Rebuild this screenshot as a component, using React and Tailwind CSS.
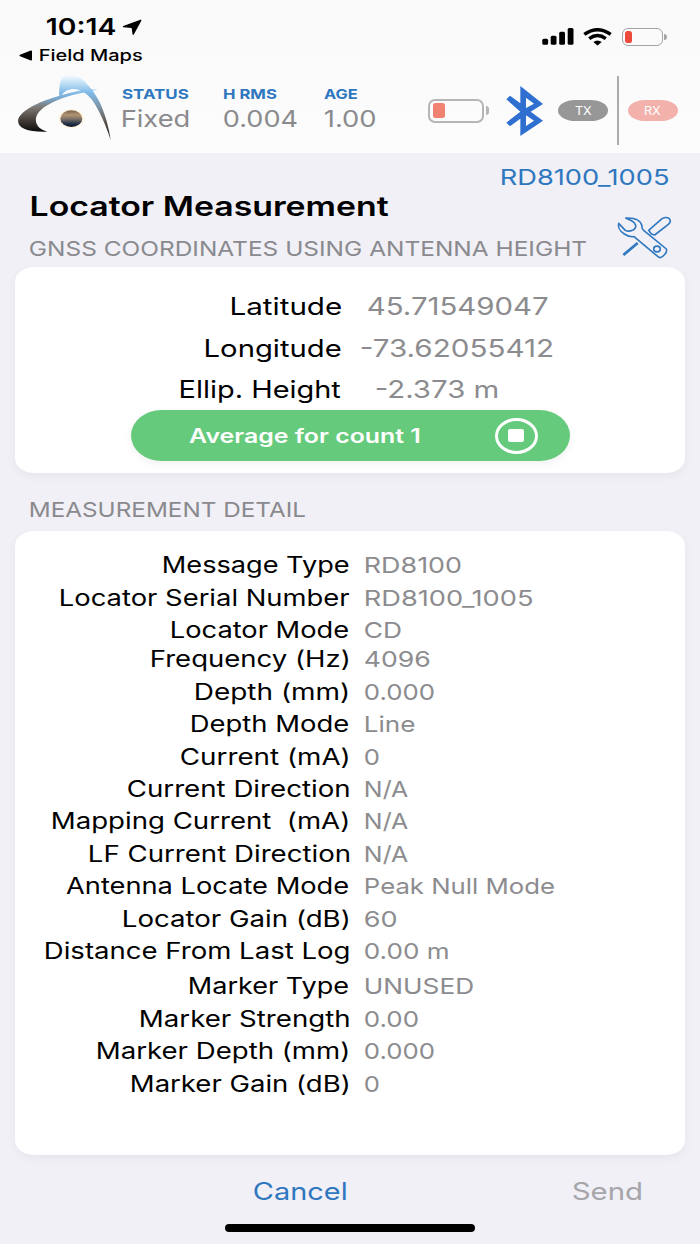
import { useLayoutEffect, useRef, useState } from "react";

// Text stretched horizontally so that its glyphs span exactly `w` pixels.
function Fit({ w, className = "", children }) {
  const ref = useRef(null);
  const [fit, setFit] = useState({ s: 1, x: 0 });
  useLayoutEffect(() => {
    const cs = getComputedStyle(ref.current);
    const ctx = document.createElement("canvas").getContext("2d");
    ctx.font = `${cs.fontWeight} ${cs.fontSize} ${cs.fontFamily}`;
    const m = ctx.measureText(children);
    const s = w / (m.actualBoundingBoxRight + m.actualBoundingBoxLeft);
    setFit({ s, x: m.actualBoundingBoxLeft * s });
  }, [w, children]);
  return (
    <div className={`shrink-0 whitespace-pre ${className}`} style={{ width: w }}>
      <span
        ref={ref}
        className="inline-block origin-left align-top"
        style={{ transform: `translateX(${fit.x}px) scaleX(${fit.s})` }}
      >
        {children}
      </span>
    </div>
  );
}

const groups = [
  [
    ["Message Type", 186.5, "RD8100", 96],
    ["Locator Serial Number", 289, "RD8100_1005", 168],
    ["Locator Mode", 178, "CD", 36],
  ],
  [
    ["Frequency (Hz)", 197, "4096", 65],
    ["Depth (mm)", 152.5, "0.000", 69],
    ["Depth Mode", 158, "Line", 49.5],
    ["Current (mA)", 167, "0", 14],
    ["Current Direction", 221, "N/A", 43],
    ["Mapping Current  (mA)", 295.5, "N/A", 43],
    ["LF Current Direction", 260.5, "N/A", 43],
    ["Antenna Locate Mode", 283, "Peak Null Mode", 189],
    ["Locator Gain (dB)", 225, "60", 31.5],
    ["Distance From Last Log", 304.5, "0.00 m", 83],
  ],
  [
    ["Marker Type", 160, "UNUSED", 108],
    ["Marker Strength", 209, "0.00", 53],
    ["Marker Depth (mm)", 250.5, "0.000", 69],
    ["Marker Gain (dB)", 217, "0", 14],
  ],
];

const coords = [
  ["Latitude", 109, "45.71549047", 180, "pl-[27.5px]"],
  ["Longitude", 134.5, "-73.62055412", 191, "pl-[20px]"],
  ["Ellip. Height", 160, "-2.373 m", 122, "pl-[35px]"],
];

function Stat({ label, lw, value, vw, className }) {
  return (
    <div className={`flex flex-col ${className}`}>
      <Fit w={lw} className="h-[16px] text-[13.5px] leading-[16px] font-bold text-[#2f77be]">{label}</Fit>
      <div className="h-[34px] pl-px">
        <Fit w={vw} className="text-[23px] leading-[34px] text-[#8a8a8d]">{value}</Fit>
      </div>
    </div>
  );
}

function Logo() {
  return (
    <svg className="h-[67px] w-[96px] shrink-0" viewBox="52 222 288 201">
      <defs>
        <linearGradient id="arc" gradientUnits="userSpaceOnUse" x1="0" y1="226" x2="0" y2="415">
          <stop offset="0" stopColor="#f6fbfe" />
          <stop offset=".14" stopColor="#b9dcf5" />
          <stop offset=".28" stopColor="#7fb9e6" />
          <stop offset=".48" stopColor="#7c99b0" />
          <stop offset=".68" stopColor="#6e655e" />
          <stop offset="1" stopColor="#111" />
        </linearGradient>
        <linearGradient id="swoosh" gradientUnits="userSpaceOnUse" x1="0" y1="268" x2="0" y2="398">
          <stop offset="0" stopColor="#8cc6f2" />
          <stop offset=".2" stopColor="#79a9d0" />
          <stop offset=".42" stopColor="#7d7872" />
          <stop offset=".75" stopColor="#3c3531" />
          <stop offset="1" stopColor="#080808" />
        </linearGradient>
        <linearGradient id="ball" x1="0" y1="0" x2="0" y2="1">
          <stop offset="0" stopColor="#7a6252" />
          <stop offset=".28" stopColor="#b39473" />
          <stop offset=".52" stopColor="#7c7068" />
          <stop offset=".8" stopColor="#25324a" />
          <stop offset="1" stopColor="#081226" />
        </linearGradient>
      </defs>
      <path fill="url(#arc)" d="M179 289C177 262 181 240 190 231C205 224 228 224 243 234C267 253 289 283 303 313C317 345 327 380 333 420C324 391 309 354 291 322C279 300 266 283 246 274C226 262 199 266 186 286Z" />
      <path fill="url(#swoosh)" d="M293 269C258 265 213 276 170 290C115 306 64 332 56 357C50 384 83 397 143 395C119 389 106 374 109 354C113 331 142 312 190 294C225 281 260 276 293 269Z" />
      <ellipse cx="215" cy="356" rx="38" ry="29" fill="#fff6e2" />
      <ellipse cx="215" cy="356" rx="33" ry="25" fill="url(#ball)" />
      <text x="143" y="374" fontSize="46" fontFamily="Liberation Serif, serif" fill="#fff">E</text>
      <text x="257" y="374" fontSize="46" fontFamily="Liberation Serif, serif" fill="#fff">S</text>
    </svg>
  );
}

export default function App() {
  return (
    <div className="flex h-[1244px] w-[700px] flex-col overflow-hidden bg-[#f1f0f6] font-['Inter',sans-serif] text-black">
      <header className="flex h-[153px] shrink-0 flex-col bg-linear-to-b from-[#f9f9f9] to-[#fcfcfc]">
        {/* Status bar */}
        <div className="flex h-[76px] justify-between">
          <div className="pt-[14px]">
            <div className="flex h-[26px] items-center pl-[47px]">
              <Fit w={68} className="text-[22.5px] leading-[26px] font-semibold">10:14</Fit>
              <svg className="ml-[7px] h-[17px] w-[20px]" viewBox="0 0 20 17">
                <path d="M1.5 7.6L18.7 1.3L11.2 15.2L10.4 9L9.6 8.3Z" stroke="#000" strokeWidth="1.4" strokeLinejoin="round" />
              </svg>
            </div>
            <div className="flex h-[31px] items-center pl-[19px]">
              <svg className="h-[11px] w-[13px]" viewBox="0 0 13 11">
                <path d="M11.8.5Q13 .2 13 1.4V9.6Q13 10.8 11.8 10.5L1 6.2Q-.2 5.5 1 4.8Z" />
              </svg>
              <Fit w={102} className="ml-[8px] text-[15.8px] leading-[31px] font-medium">Field Maps</Fit>
            </div>
          </div>
          <div className="flex h-[73px] items-center pr-[33.5px]">
            <svg className="h-[17px] w-[32px]" viewBox="0 0 32 17">
              <rect x=".3" y="10.7" width="5.8" height="6" rx="1.5" />
              <rect x="8.7" y="7.7" width="5.8" height="9" rx="1.5" />
              <rect x="17.2" y="3.8" width="5.8" height="12.9" rx="1.5" />
              <rect x="25.7" y="0" width="5.8" height="16.7" rx="1.5" />
            </svg>
            <svg className="ml-[9px] h-[18px] w-[29px]" viewBox="0 0 29 18">
              <path d="M14.5 17.4L10.3 14Q14.5 11 18.7 14Z" />
              <path d="M6.2 10.6Q14.5 4.4 22.8 10.6M1.3 6.4Q14.5 -2.9 27.7 6.4" fill="none" stroke="#000" strokeWidth="3.5" />
            </svg>
            <div className="ml-[10px] h-[18px] w-[41px] rounded-[6px] border-[1.5px] border-[#a4a4a4] p-[2px]">
              <div className="h-[12px] w-[7px] rounded-[2.5px] bg-[#ec4a3a]" />
            </div>
            <div className="ml-px h-[6px] w-[2.5px] rounded-r-full bg-[#a4a4a4]" />
          </div>
        </div>
        {/* Receiver status */}
        <div className="flex h-[77px]">
          <div className="-mt-[2px] ml-[17px]"><Logo /></div>
          <Stat className="ml-[8.5px] pt-[10px]" label="STATUS" lw={67} value="Fixed" vw={66} />
          <Stat className="ml-[34.5px] pt-[10px]" label="H RMS" lw={54} value="0.004" vw={73} />
          <Stat className="ml-[27px] pt-[10px]" label="AGE" lw={33.5} value="1.00" vw={51} />
          <div className="ml-auto flex h-[69px] items-center pr-[22px]">
            <div className="h-[24px] w-[56px] rounded-[7px] border-2 border-[#b5b5b5] p-[2.5px]">
              <div className="h-[15px] w-[12px] rounded-[2.5px] bg-[#f08272]" />
            </div>
            <div className="ml-[2px] h-[9px] w-[3px] rounded-r-full bg-[#b5b5b5]" />
            <svg className="ml-[17px] h-[50px] w-[37px]" viewBox="289 229 111 150">
              <path fill="#2f6fd0" fillRule="evenodd" d="M332 229L400 283L363 306L400 333L332 379V327L301 350L290 339L332 306L290 269L301 258L332 281ZM349 264V295L373 282ZM349 317V349L373 333Z" />
            </svg>
            <div className="ml-[14.5px] flex h-[21.5px] w-[50.5px] items-center justify-center rounded-[18px/11px] bg-[#979797]">
              <Fit w={16.5} className="text-[12px] leading-[16px] text-white">TX</Fit>
            </div>
            <div className="ml-[9px] h-[69px] w-[1.5px] bg-[#ababab]" />
            <div className="ml-[9.5px] flex h-[21.5px] w-[50px] items-center justify-center rounded-[18px/11px] bg-[#f2b1aa]">
              <Fit w={15.5} className="text-[12px] leading-[16px] text-white">RX</Fit>
            </div>
          </div>
        </div>
      </header>

      <section className="flex h-[114px] shrink-0 justify-between">
        <div className="flex flex-col pt-[33px] pl-[30px]">
          <div className="h-[40px] pl-[1.5px]">
            <Fit w={357} className="text-[27.5px] leading-[40px] font-semibold">Locator Measurement</Fit>
          </div>
          <Fit w={556} className="mt-[8px] h-[30px] text-[20px] leading-[30px] text-[#8a8a8e]">GNSS COORDINATES USING ANTENNA HEIGHT</Fit>
        </div>
        <div className="flex flex-col items-end pt-[8px] pr-[27px]">
          <div className="-ml-[100px] h-[32px] pr-[4px]">
            <Fit w={168} className="text-[22px] leading-[32px] text-[#2f77be]">RD8100_1005</Fit>
          </div>
          <svg className="mt-[22px] h-[45px] w-[56px]" viewBox="801 195 168 135" fill="none" stroke="#2f77be" strokeWidth="4.8" strokeLinejoin="round">
            <path d="M827 204C855 203 873 212 876 228Q875 236 881 241L949 297Q952 304 945 312Q938 321 931 323L924 320L852 260Q838 262 823 252C807 242 804 228 806 220L826 241Q835 246 848 241Q859 235 857 226Q854 217 846 213Z" />
            <ellipse cx="921" cy="297" rx="10" ry="8.5" />
            <path d="M896 241L936 206Q949 199 958 206Q965 214 955 223L914 255L904 252Z" />
            <path d="M863 279L820 315" strokeWidth="8.5" />
          </svg>
        </div>
      </section>

      {/* Coordinates */}
      <section className="mx-[15px] flex h-[206px] shrink-0 flex-col rounded-[18px/15px] bg-white pt-[19px] shadow-[0_3px_10px_rgba(0,0,0,0.05)]">
        {coords.map(([label, lw, value, vw, pad]) => (
          <div key={label} className="flex h-[41.6px]">
            <div className="flex w-[325.5px] justify-end">
              <Fit w={lw} className="text-[24px] leading-[41.6px]">{label}</Fit>
            </div>
            <div className={pad}>
              <Fit w={vw} className="text-[24px] leading-[41.6px] text-[#8c8c8f]">{value}</Fit>
            </div>
          </div>
        ))}
        <button className="-mt-px ml-[115.5px] flex h-[51.5px] w-[439.5px] shrink-0 items-center rounded-[31px/26px] bg-[#65ca7b] pl-[58px] shadow-[0_3px_8px_rgba(0,0,0,0.06)]">
          <Fit w={230} className="text-left text-[20px] leading-[50px] font-semibold text-white">Average for count 1</Fit>
          <div className="ml-[76px] flex h-[36px] w-[43px] items-center justify-center rounded-[50%] border-3 border-white">
            <div className="h-[13px] w-[15.5px] rounded-[2px] bg-white" />
          </div>
        </button>
      </section>

      <div className="h-[58px] shrink-0 pt-[22px] pl-[30px]">
        <Fit w={275.5} className="text-[20px] leading-[30px] text-[#8a8a8e]">MEASUREMENT DETAIL</Fit>
      </div>

      {/* Measurement detail */}
      <section className="mx-[15px] flex h-[624px] shrink-0 flex-col rounded-[18px/15px] bg-white pt-[18.3px] shadow-[0_3px_10px_rgba(0,0,0,0.05)]">
        {groups.map((rows, i) => (
          <div key={i} className={["", "-mt-[3px]", "mt-[3px]"][i]}>
            {rows.map(([label, lw, value, vw]) => (
              <div key={label} className="flex h-[32.4px]">
                <div className={`flex w-[334px] justify-end ${label.endsWith(")") ? "pr-[1.5px]" : ""}`}>
                  <Fit w={lw} className="text-[22.5px] leading-[32.4px]">{label}</Fit>
                </div>
                <Fit w={vw} className="ml-[15.7px] text-[22px] leading-[32.4px] text-[#8c8c8f]">{value}</Fit>
              </div>
            ))}
          </div>
        ))}
      </section>

      <footer className="flex grow flex-col items-center">
        <div className="flex h-[69px] w-full pt-[17px] pl-[253.5px]">
          <Fit w={91.5} className="text-[24px] leading-[40px] text-[#2f77be]">Cancel</Fit>
          <Fit w={68} className="ml-[227.5px] text-[24px] leading-[40px] text-[#a5a5aa]">Send</Fit>
        </div>
        <div className="h-[8px] w-[250px] rounded-full bg-black" />
      </footer>
    </div>
  );
}
